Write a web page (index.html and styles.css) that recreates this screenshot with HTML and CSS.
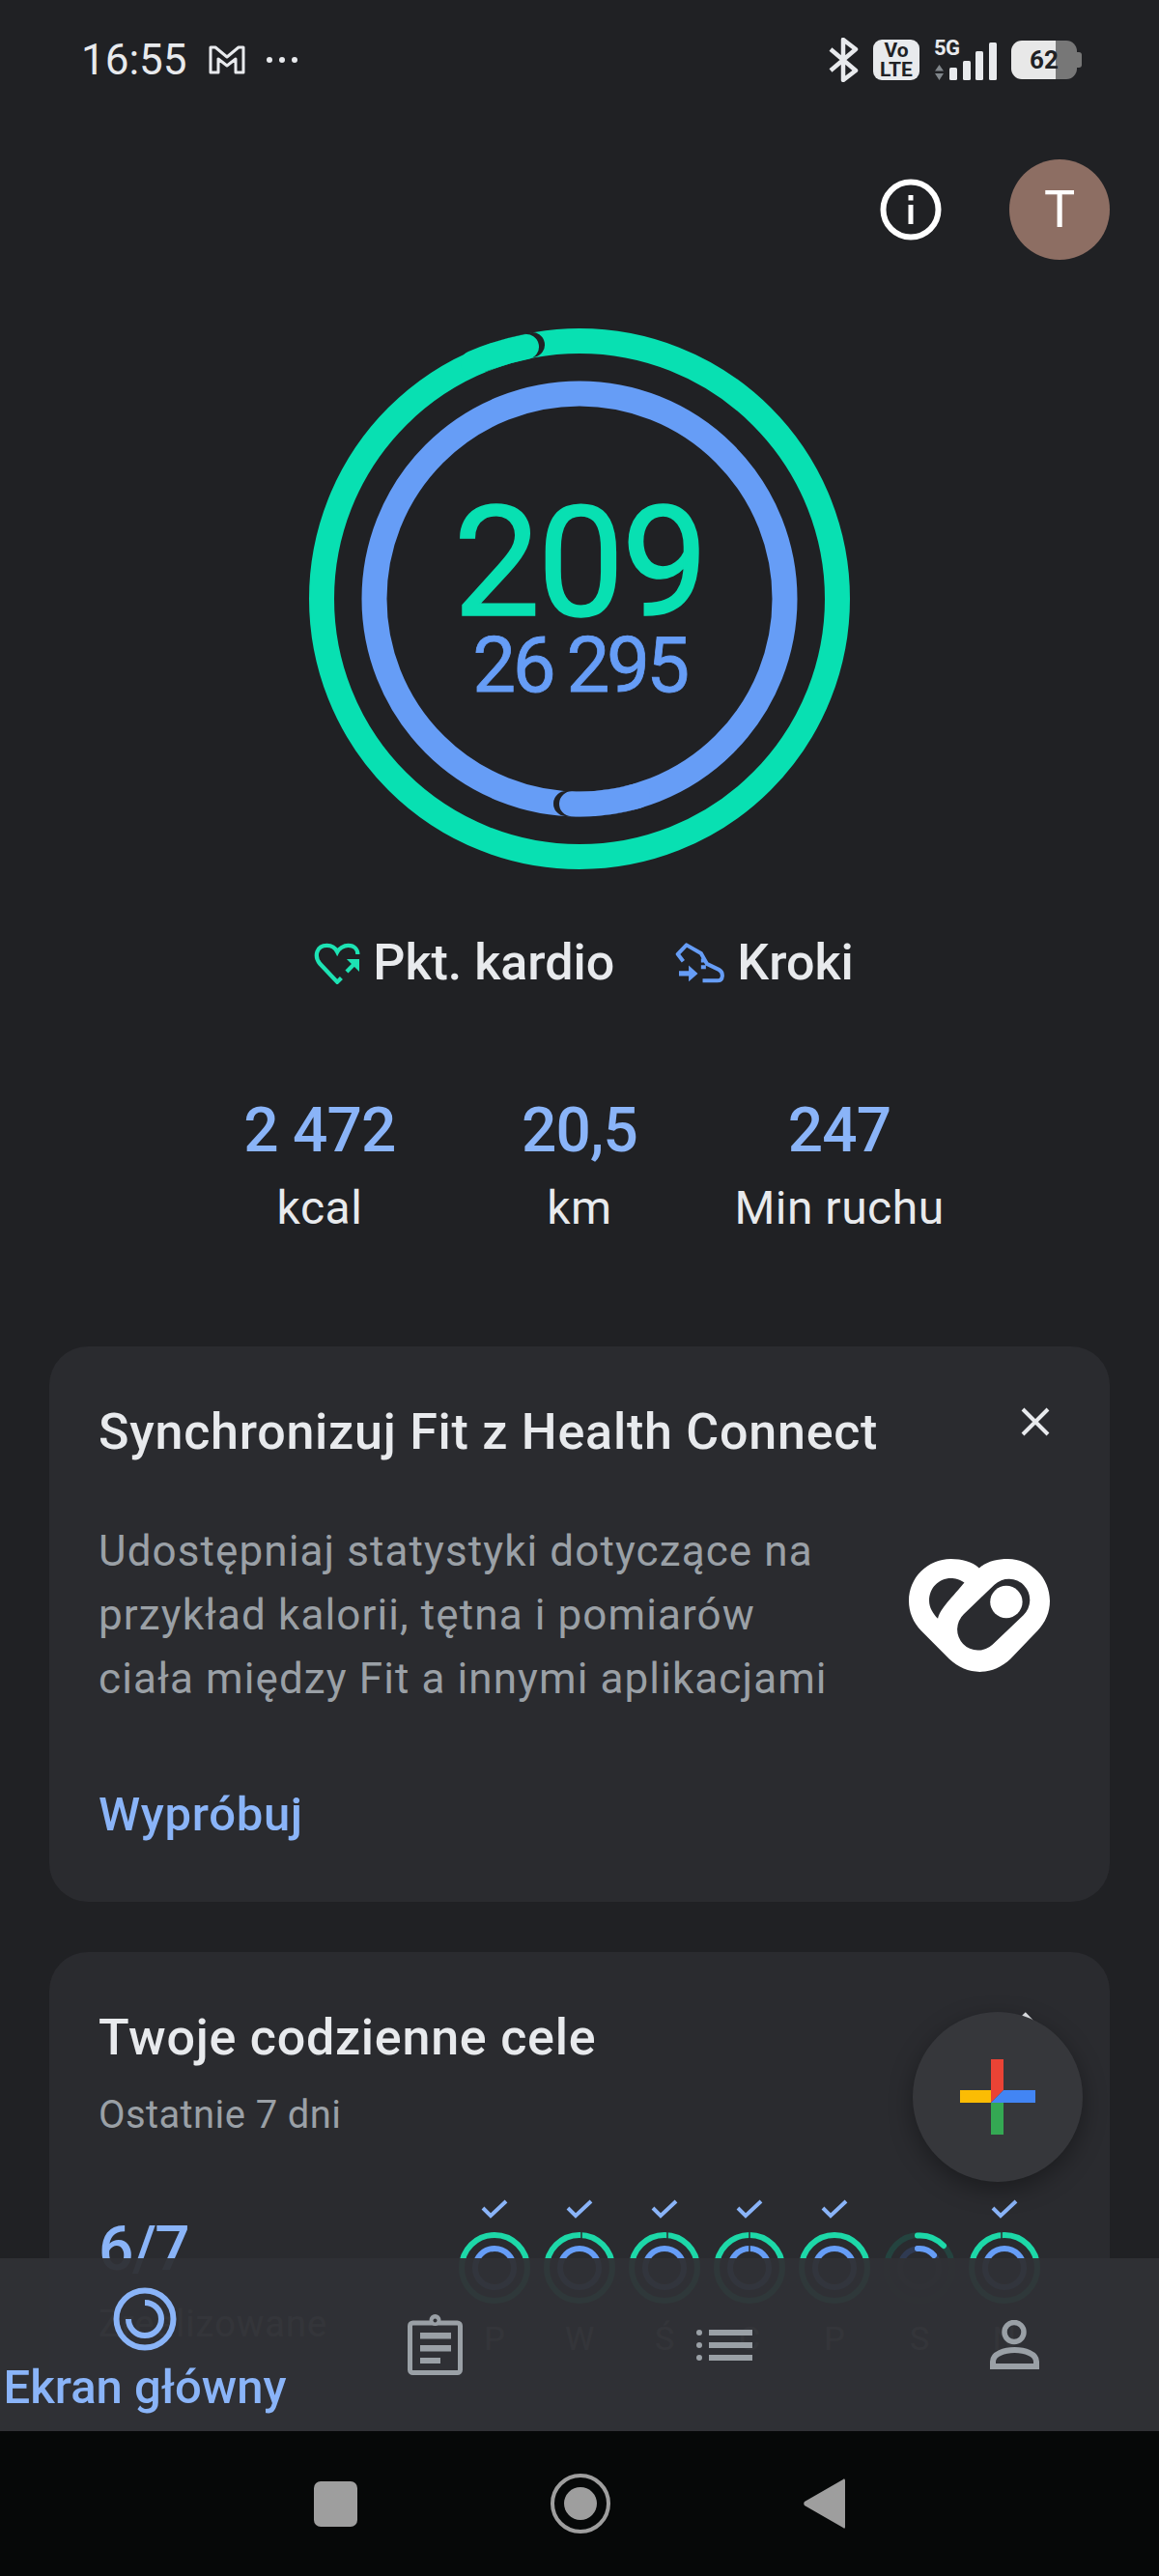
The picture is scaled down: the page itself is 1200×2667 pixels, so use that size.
FILE: index.html
```html
<!DOCTYPE html>
<html lang="pl">
<head>
  <meta charset="UTF-8">
  <meta name="viewport" content="width=device-width, initial-scale=1.0">
  <title>Fit</title>
  <link rel="stylesheet" href="styles.css">
</head>
<body>
  <div class="main">
    <div class="status">
      <div class="status-left">
        <span class="time">16:55</span>
        <svg class="ic-gmail" width="38" height="30" viewBox="0 0 38 30"><path d="M2 2h5l12 10L31 2h5v26h-8V14l-9 7-9-7v14H2z" fill="none" stroke="#e8eaed" stroke-width="3" stroke-linejoin="round"/></svg>
        <svg class="ic-dots" width="34" height="8" viewBox="0 0 34 8"><circle cx="4" cy="4" r="3" fill="#e8eaed"/><circle cx="17" cy="4" r="3" fill="#e8eaed"/><circle cx="30" cy="4" r="3" fill="#e8eaed"/></svg>
      </div>
      <div class="status-right">
        <svg width="32" height="46" viewBox="0 0 32 46"><path d="M3 12l26 22-13 10V2l13 10L3 34" fill="none" stroke="#e8eaed" stroke-width="4.5" stroke-linejoin="round"/></svg>
        <div class="volte"><span>Vo</span><span>LTE</span></div>
        <div class="signal">
          <div class="signal-g">
            <span>5G</span>
            <svg width="11" height="16" viewBox="0 0 11 16"><path d="M5.5 0L10 6.5H1zM1 9h9l-4.500 7z" fill="#80868b"/></svg>
          </div>
          <svg width="49" height="39" viewBox="0 0 49 39"><rect x="0" y="26" width="8" height="13" rx="1.500" fill="#e8eaed"/><rect x="14" y="19" width="8" height="20" rx="1.500" fill="#e8eaed"/><rect x="27" y="9" width="8" height="30" rx="1.500" fill="#e8eaed"/><rect x="41" y="0" width="8" height="39" rx="1.500" fill="#e8eaed"/></svg>
        </div>
        <div class="battery"><div class="battery-body">62</div><div class="battery-nub"></div></div>
      </div>
    </div>

    <div class="top-actions">
      <svg width="64" height="64" viewBox="0 0 64 64"><circle cx="32" cy="32" r="28.500" fill="none" stroke="#fff" stroke-width="6"/><rect x="29.500" y="27" width="5" height="20" fill="#fff"/><rect x="29.500" y="17" width="5" height="5.500" fill="#fff"/></svg>
      <div class="avatar">T</div>
    </div>

    <div class="rings">
      <svg width="560" height="560" viewBox="0 0 560 560">
        <circle cx="280" cy="280" r="267" fill="none" stroke="#08e0b2" stroke-width="26"/>
        <circle cx="280" cy="280" r="212.500" fill="none" stroke="#669df6" stroke-width="26"/>
        <path d="M180 32A267 267 0 0 1 231 17" fill="none" stroke="#202124" stroke-width="26" stroke-linecap="round"/>
        <path d="M170 36A267 267 0 0 1 225 19" fill="none" stroke="#08e0b2" stroke-width="26" stroke-linecap="round"/>
        <path d="M330 486.500A212.500 212.500 0 0 1 266 492" fill="none" stroke="#202124" stroke-width="26" stroke-linecap="round"/>
        <path d="M340 484A212.500 212.500 0 0 1 272 492.300" fill="none" stroke="#669df6" stroke-width="26" stroke-linecap="round"/>
      </svg>
      <div class="ring-text">
        <div class="ring-big">209</div>
        <div class="ring-small">26 295</div>
      </div>
    </div>

    <div class="legend">
      <div class="legend-item">
        <svg width="49" height="44" viewBox="22 30 148 135"><path d="M108 145L95 158 40 100C20 75 30 42 62 42c16 0 28 10 33 20 5-10 20-20 35-20 20 0 30 13 30 28" fill="none" stroke="#1de3b4" stroke-width="13"/><path d="M125 125l25-25" fill="none" stroke="#1de3b4" stroke-width="13"/><path d="M125 85h40v40z" fill="#1de3b4"/></svg>
        <span>Pkt. kardio</span>
      </div>
      <div class="legend-item">
        <svg width="52" height="42" viewBox="20 35 155 125"><path d="M45 92L28 70l27-28 45 26 18 32 37 18c15 8 15 34-5 34h-45M100 90h15M115 110h-15" fill="none" stroke="#669df6" stroke-width="12" stroke-linejoin="round"/><path d="M32 122h30v-17l28 25-28 25v-17H32z" fill="#669df6"/></svg>
        <span>Kroki</span>
      </div>
    </div>

    <div class="stats">
      <div class="stat"><div class="stat-num">2 472</div><div class="stat-label">kcal</div></div>
      <div class="stat"><div class="stat-num">20,5</div><div class="stat-label">km</div></div>
      <div class="stat"><div class="stat-num">247</div><div class="stat-label">Min ruchu</div></div>
    </div>

    <div class="card card-sync">
      <div class="card-head">
        <div class="card-title">Synchronizuj Fit z Health Connect</div>
        <svg class="ic-close" width="30" height="30" viewBox="0 0 30 30"><path d="M2 2l26 26M28 2L2 28" stroke="#e8eaed" stroke-width="4" fill="none"/></svg>
      </div>
      <div class="sync-body">
        <div class="sync-text">Udostępniaj statystyki dotyczące na<br>przykład kalorii, tętna i pomiarów<br>ciała między Fit a innymi aplikacjami</div>
        <svg width="146" height="117" viewBox="275 635 437 350">
          <path d="M493 663C470 643 440 635 405 635 333 635 275 693 275 765c0 35 14 67 38 92l87 88c55 53 135 53 190 0l84-88c24-25 38-57 38-92 0-72-58-130-130-130-34 0-66 8-89 28z" fill="#fff"/>
          <path d="M447 708c-17-10-27-13-42-13-37 0-67 30-67 70 0 20 12 40 27 55 7-30 30-50 82-112z" fill="#2a2b2f"/>
          <path d="M490 853l95-91" stroke="#2a2b2f" stroke-width="130" stroke-linecap="round" fill="none"/>
          <circle cx="577" cy="768" r="50" fill="#fff"/>
        </svg>
      </div>
      <div class="card-link">Wypróbuj</div>
    </div>

    <div class="card card-goals">
      <div class="card-head">
        <div class="card-title">Twoje codzienne cele</div>
        <svg class="ic-chevron" width="30" height="56" viewBox="0 0 30 56"><path d="M3 3l24 25L3 53" fill="none" stroke="#e8eaed" stroke-width="5"/></svg>
      </div>
      <div class="card-sub">Ostatnie 7 dni</div>
      <div class="goals">
        <div class="goals-left">
          <div class="goals-num">6/7</div>
          <div class="goals-label">Zrealizowane</div>
        </div>
        <div class="days">
          <div class="day">
            <svg class="check" width="28" height="20" viewBox="0 0 28 20"><path d="M2 9l8 8L26 2" fill="none" stroke="#8ab4f8" stroke-width="4"/></svg>
            <svg width="74" height="74" viewBox="0 0 74 74"><circle cx="37" cy="37" r="34" class="r-out"/><circle cx="37" cy="37" r="20" class="r-in"/></svg>
            <div class="day-name">P</div>
          </div>
          <div class="day">
            <svg class="check" width="28" height="20" viewBox="0 0 28 20"><path d="M2 9l8 8L26 2" fill="none" stroke="#8ab4f8" stroke-width="4"/></svg>
            <svg width="74" height="74" viewBox="0 0 74 74"><circle cx="37" cy="37" r="34" class="r-out"/><circle cx="37" cy="37" r="20" class="r-in"/><path d="M39 0v7" class="r-notch"/></svg>
            <div class="day-name">W</div>
          </div>
          <div class="day">
            <svg class="check" width="28" height="20" viewBox="0 0 28 20"><path d="M2 9l8 8L26 2" fill="none" stroke="#8ab4f8" stroke-width="4"/></svg>
            <svg width="74" height="74" viewBox="0 0 74 74"><circle cx="37" cy="37" r="34" class="r-out"/><circle cx="37" cy="37" r="20" class="r-in"/><path d="M40 0v7" class="r-notch"/></svg>
            <div class="day-name">Ś</div>
          </div>
          <div class="day">
            <svg class="check" width="28" height="20" viewBox="0 0 28 20"><path d="M2 9l8 8L26 2" fill="none" stroke="#8ab4f8" stroke-width="4"/></svg>
            <svg width="74" height="74" viewBox="0 0 74 74"><circle cx="37" cy="37" r="34" class="r-out"/><circle cx="37" cy="37" r="20" class="r-in"/><path d="M37 0v7M37 14v7" class="r-notch"/></svg>
            <div class="day-name">C</div>
          </div>
          <div class="day">
            <svg class="check" width="28" height="20" viewBox="0 0 28 20"><path d="M2 9l8 8L26 2" fill="none" stroke="#8ab4f8" stroke-width="4"/></svg>
            <svg width="74" height="74" viewBox="0 0 74 74"><circle cx="37" cy="37" r="34" class="r-out"/><circle cx="37" cy="37" r="20" class="r-in"/></svg>
            <div class="day-name">P</div>
          </div>
          <div class="day">
            <div class="check-empty"></div>
            <svg width="74" height="74" viewBox="0 0 74 74"><circle cx="37" cy="37" r="34" class="r-out dim"/><circle cx="37" cy="37" r="20" class="r-in dim"/><path d="M35 3.500A34 34 0 0 1 62 14" class="r-arc-g"/><path d="M35 17A20 20 0 0 1 52 24" class="r-arc-b"/></svg>
            <div class="day-name">S</div>
          </div>
          <div class="day">
            <svg class="check" width="28" height="20" viewBox="0 0 28 20"><path d="M2 9l8 8L26 2" fill="none" stroke="#8ab4f8" stroke-width="4"/></svg>
            <svg width="74" height="74" viewBox="0 0 74 74"><circle cx="37" cy="37" r="34" class="r-out"/><circle cx="37" cy="37" r="20" class="r-in"/><path d="M34 0v7" class="r-notch"/></svg>
            <div class="day-name">N</div>
          </div>
        </div>
      </div>
    </div>

    <div class="fab">
      <svg width="78" height="78" viewBox="0 0 78 78">
        <path d="M32 0h13v32L32 45z" fill="#ea4335"/>
        <path d="M45 32h33v13H32z" fill="#4285f4"/>
        <path d="M32 45h13v33H32z" fill="#34a853"/>
        <path d="M0 32h32v13H0z" fill="#fbbc04"/>
      </svg>
    </div>

    <div class="bottom-nav">
      <div class="nav-item nav-active">
        <svg width="66" height="66" viewBox="0 0 66 66"><circle cx="33" cy="33" r="29.500" fill="none" stroke="#8ab4f8" stroke-width="6"/><path d="M33 16A17 17 0 1 1 16 33" fill="none" stroke="#8ab4f8" stroke-width="6"/></svg>
        <span>Ekran główny</span>
      </div>
      <div class="nav-item">
        <svg width="57" height="63" viewBox="0 0 57 63"><rect x="2.500" y="9" width="52" height="51.500" rx="3" fill="none" stroke="#9aa0a6" stroke-width="5"/><circle cx="28.500" cy="6" r="6" fill="#9aa0a6"/><circle cx="28.500" cy="6.500" r="2" fill="#303135"/><path d="M13 19h32v6.500H13zM13 32h32v6.500H13zM13 45h21v6H13z" fill="#9aa0a6"/></svg>
      </div>
      <div class="nav-item">
        <svg width="58" height="34" viewBox="0 0 58 34"><circle cx="3" cy="4" r="3" fill="#9aa0a6"/><circle cx="3" cy="17" r="3" fill="#9aa0a6"/><circle cx="3" cy="30" r="3" fill="#9aa0a6"/><path d="M13 1h45v6H13zM13 14h45v6H13zM13 27h45v6H13z" fill="#9aa0a6"/></svg>
      </div>
      <div class="nav-item">
        <svg width="51" height="51" viewBox="0 0 51 51"><circle cx="25" cy="12.500" r="10" fill="none" stroke="#9aa0a6" stroke-width="5.500"/><path d="M3 48v-5c0-8 12-12 22.500-12S48 35 48 43v5z" fill="none" stroke="#9aa0a6" stroke-width="6"/></svg>
      </div>
    </div>
  </div>

  <div class="sys-nav">
    <div class="sys-square"></div>
    <svg width="62" height="62" viewBox="0 0 62 62"><circle cx="31" cy="31" r="29" fill="none" stroke="#9e9e9e" stroke-width="4"/><circle cx="31" cy="31" r="17" fill="#9e9e9e"/></svg>
    <svg width="43" height="52" viewBox="0 0 43 52"><path d="M41 1c1-1 2 0 2 1v48c0 2-1 2-2 1L1 28c-1-1-1-3 0-4z" fill="#9e9e9e"/></svg>
  </div>
</body>
</html>
```

FILE: styles.css
```css
* {
  box-sizing: border-box;
}
body {
  margin: 0;
  width: 1200px;
  height: 2667px;
  overflow: hidden;
  background-color: #060808;
  color: #e8eaed;
  font-family: Roboto, "Liberation Sans", sans-serif;
}
.main {
  position: relative;
  height: 2517px;
  overflow: hidden;
  background-color: #202124;
}

/* status bar */
.status {
  display: flex;
  justify-content: space-between;
  align-items: center;
  height: 124px;
  padding: 0 80px 0 84px;
}
.status-left {
  display: flex;
  align-items: center;
}
.time {
  width: 132px;
  font-size: 44px;
  line-height: 50px;
}
.ic-dots {
  margin-left: 21px;
}
.status-right {
  display: flex;
  align-items: center;
  gap: 15px;
}
.volte {
  display: flex;
  flex-direction: column;
  align-items: center;
  width: 48px;
  height: 42px;
  padding-top: 1px;
  border-radius: 9px;
  background-color: #e8eaed;
  color: #202124;
  font-size: 21px;
  font-weight: 700;
  line-height: 20px;
}
.signal {
  display: flex;
  align-items: flex-end;
  gap: 5px;
}
.signal-g {
  display: flex;
  flex-direction: column;
  gap: 9px;
  width: 11px;
  color: #e8eaed;
  font-size: 22px;
  font-weight: 700;
  line-height: 16px;
  letter-spacing: -0.5px;
  white-space: nowrap;
}
.battery {
  display: flex;
  align-items: center;
}
.battery-body {
  width: 68px;
  height: 40px;
  border-radius: 11px;
  background: linear-gradient(90deg, #e8e8e8 68%, #777 68%);
  color: #202124;
  font-size: 26px;
  font-weight: 700;
  line-height: 40px;
  text-align: center;
}
.battery-nub {
  width: 5px;
  height: 16px;
  border-radius: 0 3px 3px 0;
  background-color: #777;
}

/* header */
.top-actions {
  display: flex;
  justify-content: flex-end;
  align-items: center;
  gap: 70px;
  height: 104px;
  margin-top: 41px;
  padding-right: 51px;
}
.avatar {
  width: 104px;
  height: 104px;
  border-radius: 50%;
  background-color: #8d6e63;
  color: #fff;
  font-size: 54px;
  line-height: 104px;
  text-align: center;
}

/* rings */
.rings {
  display: grid;
  justify-content: center;
  margin-top: 71px;
}
.rings > * {
  grid-area: 1 / 1;
}
.ring-text {
  padding-top: 180px;
  text-align: center;
}
.ring-big {
  color: #08e0b2;
  font-size: 160px;
  line-height: 126px;
  letter-spacing: -3px;
  -webkit-text-stroke: 1.5px #08e0b2;
}
.ring-small {
  color: #669df6;
  font-size: 80px;
  line-height: 87px;
  letter-spacing: -3.5px;
  word-spacing: -2px;
  -webkit-text-stroke: 0.8px #669df6;
}

/* legend */
.legend {
  display: flex;
  justify-content: center;
  gap: 63px;
  height: 60px;
  margin-top: 67px;
  padding-left: 9px;
}
.legend-item {
  display: flex;
  align-items: center;
  gap: 12px;
  font-size: 52px;
  font-weight: 500;
  line-height: 60px;
}

/* stats */
.stats {
  display: grid;
  grid-template-columns: repeat(3, 269px);
  justify-content: center;
  margin-top: 104px;
  text-align: center;
}
.stat-num {
  color: #8ab4f8;
  font-size: 64px;
  font-weight: 500;
  line-height: 80px;
  letter-spacing: -0.8px;
}
.stat-label {
  margin-top: 10px;
  font-size: 48px;
  line-height: 60px;
  letter-spacing: 0.5px;
}

/* cards */
.card {
  margin: 0 51px;
  padding: 0 62px 0 51px;
  border-radius: 40px;
  background-color: #2a2b2f;
}
.card-sync {
  margin-top: 113px;
  padding-top: 54px;
  padding-bottom: 60px;
}
.card-goals {
  margin-top: 52px;
  padding-top: 54px;
  height: 900px;
}
.card-head {
  display: flex;
  justify-content: space-between;
  align-items: flex-start;
}
.card-title {
  font-size: 52px;
  font-weight: 500;
  line-height: 70px;
  letter-spacing: 0.75px;
}
.ic-close {
  margin-top: 9px;
}
.ic-chevron {
  margin-top: 7px;
}
.sync-body {
  display: flex;
  justify-content: space-between;
  align-items: center;
  margin-top: 55px;
}
.sync-text {
  color: #9aa0a6;
  font-size: 44px;
  line-height: 66px;
  letter-spacing: 1.1px;
}
.card-link {
  margin-top: 78px;
  color: #8ab4f8;
  font-size: 49px;
  font-weight: 500;
  line-height: 60px;
  letter-spacing: 0.7px;
}
.card-sub {
  margin-top: 17px;
  color: #9aa0a6;
  font-size: 40px;
  line-height: 56px;
  letter-spacing: 0.4px;
}

/* goals row */
.goals {
  display: flex;
  justify-content: space-between;
  margin-top: 59px;
  padding-right: 3px;
}
.goals-left {
  padding-top: 12px;
}
.goals-num {
  color: #8ab4f8;
  font-size: 64px;
  font-weight: 500;
  line-height: 80px;
  letter-spacing: -1.5px;
}
.goals-label {
  margin-top: 12px;
  color: #9aa0a6;
  font-size: 38px;
  line-height: 50px;
  letter-spacing: 1px;
}
.days {
  display: flex;
}
.day {
  display: flex;
  flex-direction: column;
  align-items: center;
  width: 88px;
}
.check,
.check-empty {
  height: 20px;
  margin-bottom: 14px;
}
.day-name {
  margin-top: 16px;
  color: #9aa0a6;
  font-size: 34px;
  line-height: 40px;
}
.r-out,
.r-in,
.r-arc-g,
.r-arc-b {
  fill: none;
  stroke-width: 6px;
}
.r-out,
.r-arc-g {
  stroke: #1dd8a8;
}
.r-in,
.r-arc-b {
  stroke: #669df6;
}
.r-arc-g,
.r-arc-b {
  stroke-linecap: round;
}
.r-out.dim {
  stroke: #24433f;
}
.r-in.dim {
  stroke: #2f3a52;
}
.r-notch {
  fill: none;
  stroke: #2a2b2f;
  stroke-width: 1.500px;
}

/* overlays */
.fab {
  position: absolute;
  right: 79px;
  bottom: 258px;
  display: flex;
  justify-content: center;
  align-items: center;
  width: 176px;
  height: 176px;
  border-radius: 50%;
  background-color: #36373b;
  box-shadow: 0 8px 24px rgba(0, 0, 0, 0.35);
}
.bottom-nav {
  position: absolute;
  left: 0;
  bottom: 0;
  display: grid;
  grid-template-columns: repeat(4, 300px);
  width: 100%;
  height: 179px;
  background-color: rgba(48, 49, 53, 0.96);
}
.nav-item {
  display: flex;
  flex-direction: column;
  justify-content: center;
  align-items: center;
}
.nav-active {
  justify-content: flex-start;
  padding-top: 30px;
  color: #8ab4f8;
  font-size: 49px;
  font-weight: 500;
  line-height: 56px;
  white-space: nowrap;
}
.nav-active span {
  margin-top: 10px;
}

/* system nav */
.sys-nav {
  display: flex;
  justify-content: center;
  align-items: center;
  gap: 200px;
  height: 150px;
  background-color: #060808;
}
.sys-square {
  width: 45px;
  height: 47px;
  border-radius: 7px;
  background-color: #9e9e9e;
}
```
